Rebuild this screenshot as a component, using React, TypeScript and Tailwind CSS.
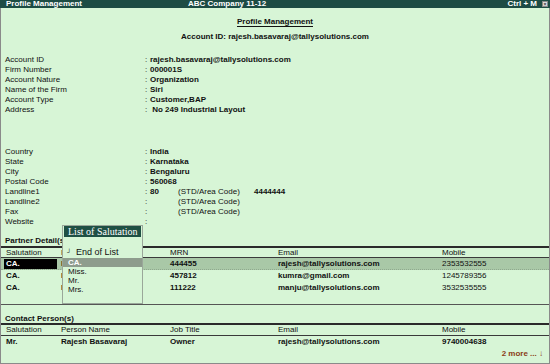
import React from "react";

const topFields = [
  ["Account ID", "rajesh.basavaraj@tallysolutions.com"],
  ["Firm Number", "000001S"],
  ["Account Nature", "Organization"],
  ["Name of the Firm", "Siri"],
  ["Account Type", "Customer,BAP"],
  ["Address", "\u00a0No 249 Industrial Layout"],
];

const placeFields = [
  ["Country", "India"],
  ["State", "Karnataka"],
  ["City", "Bengaluru"],
  ["Postal Code", "560068"],
];

const partners = [
  { sal: "CA.", name: "Rajesh Basavaraj", mrn: "444455", email: "rajesh@tallysolutions.com", mobile: "2353532555" },
  { sal: "CA.", name: "Kumar", mrn: "457812", email: "kumra@gmail.com", mobile: "1245789356" },
  { sal: "CA.", name: "Manjunath", mrn: "111222", email: "manju@tallysolutions.com", mobile: "3532535555" },
];

const cols = "grid grid-cols-[53px_113px_108px_164px_1fr] px-[3px]";

const Field = ({ label, children }: { label: string; children?: React.ReactNode }) => (
  <div className="grid h-[10px] grid-cols-[140px_5px_1fr] leading-[10px]">
    <span>{label}</span>
    <span>:</span>
    <span className="font-bold">{children}</span>
  </div>
);

const AreaCode = ({ code, number }: { code?: string; number?: string }) => (
  <span className="flex">
    <span className="w-[28px] font-bold">{code}</span>
    <span className="w-[76px] font-normal">(STD/Area Code)</span>
    <span className="font-bold">{number}</span>
  </span>
);

const HeaderRow = ({ third }: { third: string }) => (
  <div className={`${cols} h-[9px] items-center leading-[9px]`}>
    <span className="pl-[2px]">Salutation</span>
    <span className="pl-[4px]">Person Name</span>
    <span>{third}</span>
    <span>Email</span>
    <span>Mobile</span>
  </div>
);

export default function App() {
  return (
    <div className="relative h-[364px] w-[550px] overflow-hidden bg-[#d7f5d6] font-['Liberation_Sans',Arial,sans-serif] text-[8px] text-[#111]">
      {/* title bar */}
      <div className="flex h-[8px] items-center bg-[#1d4c44] pl-[6px] pr-[2px] text-[8px] font-bold leading-[8px] text-white">
        <span className="w-[182px]">Profile Management</span>
        <span className="flex-1">ABC Company 11-12</span>
        <span className="mr-[5px]">Ctrl + M</span>
        <span className="flex h-[6px] w-[6px] items-center justify-center border border-[#888] bg-[#ddd] text-[5px] leading-none text-[#333]">
          ×
        </span>
      </div>

      <div className="flex h-[356px] flex-col border-x border-b border-[#8a8a8a]">
        <div className="mt-[9px] h-[10px] text-center font-bold leading-[10px] underline underline-offset-2">
          Profile Management
        </div>
        <div className="mt-[5px] h-[10px] text-center font-bold leading-[10px]">
          Account ID: rajesh.basavaraj@tallysolutions.com
        </div>

        <div className="mt-[13px] pl-[4px]">
          {topFields.map(([l, v]) => (
            <Field key={l} label={l}>
              {v}
            </Field>
          ))}
        </div>

        <div className="mt-[32px] pl-[4px]">
          {placeFields.map(([l, v]) => (
            <Field key={l} label={l}>
              {v}
            </Field>
          ))}
          <Field label="Landline1">
            <AreaCode code="80" number="4444444" />
          </Field>
          <Field label="Landline2">
            <AreaCode />
          </Field>
          <Field label="Fax">
            <AreaCode />
          </Field>
          <Field label="Website" />
        </div>

        {/* partner details */}
        <div className="mt-[9px] h-[10px] pl-[4px] font-bold leading-[10px]">Partner Detail(s)</div>
        <div className="border-t-2 border-[#2a2a2a]" />
        <HeaderRow third="MRN" />
        <div className="border-t border-[#3a3a3a]" />
        {partners.map((p, i) => (
          <div
            key={i}
            className={`${cols} h-[12px] items-center font-bold leading-[10px] ${
              i === 0 ? "border-b border-dotted border-[#8fa98e] bg-[#a9c8a7]" : ""
            }`}
          >
            <span className={`pl-[2px] ${i === 0 ? "h-[10px] bg-black text-white" : ""}`}>{p.sal}</span>
            <span className="pl-[4px]">{p.name}</span>
            <span>{p.mrn}</span>
            <span>{p.email}</span>
            <span className="font-normal">{p.mobile}</span>
          </div>
        ))}
        <div className="mt-[10px] border-t border-[#555]" />

        {/* contact persons */}
        <div className="mt-[9px] h-[9px] pl-[4px] font-bold leading-[9px]">Contact Person(s)</div>
        <div className="border-t-2 border-[#2a2a2a]" />
        <div className={`${cols} h-[10px] items-center leading-[10px]`}>
          <span className="pl-[2px]">Salutation</span>
          <span className="pl-[4px]">Person Name</span>
          <span>Job Title</span>
          <span>Email</span>
          <span>Mobile</span>
        </div>
        <div className="border-t border-[#3a3a3a]" />
        <div className={`${cols} mt-[1px] h-[10px] items-center font-bold leading-[10px]`}>
          <span className="pl-[2px]">Mr.</span>
          <span className="pl-[4px]">Rajesh Basavaraj</span>
          <span>Owner</span>
          <span>rajesh@tallysolutions.com</span>
          <span>9740004638</span>
        </div>
        <div className="mt-[2px] flex h-[10px] justify-end pr-[6px] font-bold leading-[10px] text-[#8a3b17]">
          2 more ... ↓
        </div>
      </div>

      {/* List of Salutation popup */}
      <div className="absolute left-[62px] top-[225px] flex h-[79px] w-[81px] flex-col border border-[#9aa79a] bg-[#d7f5d6]">
        <div className="mx-[1px] h-[11px] bg-[#1f5044] pl-[4px] font-['Liberation_Serif',serif] text-[10px] leading-[11px] text-white">
          List of Salutation
        </div>
        <div className="mt-[10px] flex h-[10px] items-center leading-[10px]">
          <span className="w-[13px] pl-[4px] text-[6px]">┘</span>
          <span className="text-[9px]">End of List</span>
        </div>
        <div className="mt-[1px] h-[9px] bg-[#8e9c8d] pl-[5px] font-bold leading-[9px] text-white">CA.</div>
        <div className="h-[9px] pl-[5px] leading-[9px]">Miss.</div>
        <div className="h-[9px] pl-[5px] leading-[9px]">Mr.</div>
        <div className="h-[9px] pl-[5px] leading-[9px]">Mrs.</div>
      </div>
    </div>
  );
}
